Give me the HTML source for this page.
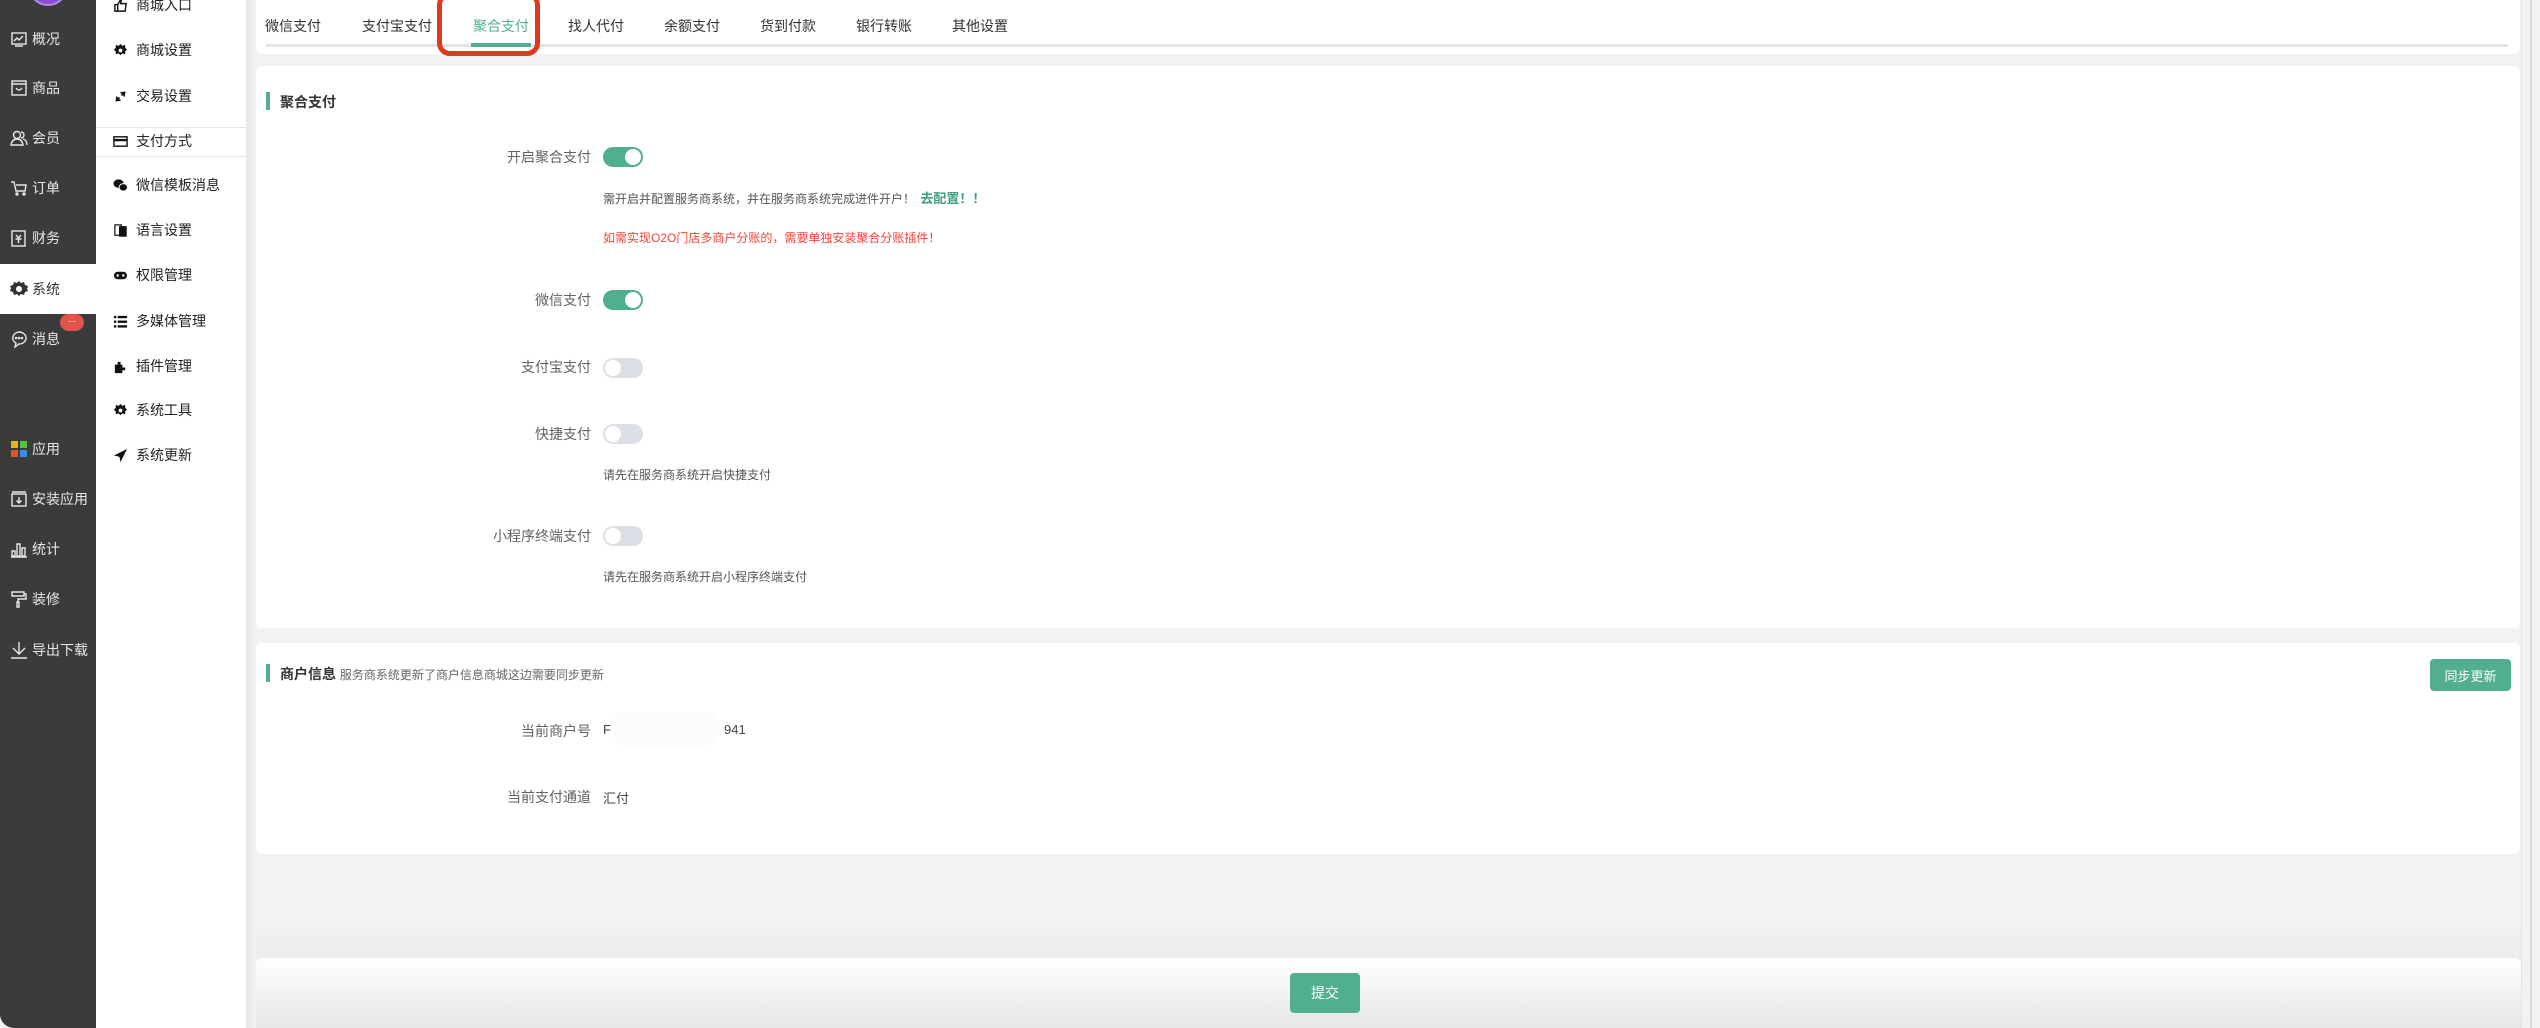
<!DOCTYPE html>
<html><head><meta charset="utf-8">
<style>
*{margin:0;padding:0;box-sizing:border-box}
body{width:2540px;height:1028px;overflow:hidden;background:#f2f2f2;font-family:"Liberation Sans","Noto Sans CJK SC",sans-serif;position:relative;color:#303133}
.abs{position:absolute}
#nav{left:0;top:0;width:96px;height:1028px;background:#3b3b3b;border-bottom-left-radius:14px}
.ni{position:absolute;left:0;width:96px;height:50px;color:#e8e8e8;font-size:14px;display:flex;align-items:center;padding-left:10px}
.ni svg{width:18px;height:18px;margin-right:4px;flex:none}
.ni.act{background:#fff;color:#333}
#sub{left:96px;top:0;width:150px;height:1028px;background:#fff}
#subsh{left:246px;top:0;width:10px;height:1028px;background:linear-gradient(90deg,#e6e6e6,#f2f2f2)}
.si{position:absolute;left:0;width:150px;height:40px;font-size:14px;color:#222;display:flex;align-items:center;padding-left:17px}
.si svg{width:15px;height:15px;margin-right:8px;flex:none}
.card{position:absolute;left:256px;width:2264px;background:#fff;border-radius:6px}
.tab{position:absolute;top:16px;font-size:14px;color:#303133}
.lbl{position:absolute;font-size:14px;color:#606266;text-align:right;width:200px;left:391px}
.sw{position:absolute;left:603px;width:40px;height:20px;border-radius:10px;background:#dcdfe6}
.sw::after{content:"";position:absolute;top:2px;left:2px;width:16px;height:16px;border-radius:50%;background:#fff}
.sw.on{background:#52ae91}
.sw.on::after{left:22px}
.help{position:absolute;left:603px;font-size:12px;color:#555}
.btn{position:absolute;background:#52ae91;color:#fff;border-radius:4px;display:flex;align-items:center;justify-content:center;font-size:13px}
</style></head><body>
<div id="nav" class="abs">
  <div class="abs" style="left:28px;top:-34px;width:40px;height:40px;border-radius:50%;background:#8a4fd0;border:2px solid #b28be6"></div>
  <div class="ni" style="top:14px"><svg viewBox="0 0 18 18" fill="none" stroke="#e8e8e8" stroke-width="1.4"><rect x="2" y="3" width="14" height="11"/><path d="M4 11l3-3 2 2 4-4M5 16h8"/></svg>概况</div>
  <div class="ni" style="top:63px"><svg viewBox="0 0 18 18" fill="none" stroke="#e8e8e8" stroke-width="1.4"><rect x="2" y="2" width="14" height="14"/><path d="M2 5h14M6 9q3 4 6 0"/></svg>商品</div>
  <div class="ni" style="top:113px"><svg viewBox="0 0 18 18" fill="none" stroke="#e8e8e8" stroke-width="1.4"><circle cx="7" cy="6" r="3.5"/><path d="M1 16q1-6 6-6t6 6zM11 3a3 3 0 010 6M13 10q4 1 4 6"/></svg>会员</div>
  <div class="ni" style="top:163px"><svg viewBox="0 0 18 18" fill="none" stroke="#e8e8e8" stroke-width="1.4"><path d="M1 3h3l2 9h9l1-6H6"/><circle cx="7" cy="15" r="1"/><circle cx="14" cy="15" r="1"/></svg>订单</div>
  <div class="ni" style="top:213px"><svg viewBox="0 0 18 18" fill="none" stroke="#e8e8e8" stroke-width="1.4"><rect x="2" y="2" width="13" height="15"/><path d="M6 6l2.5 3L11 6M5.5 10h6M8.5 9v5"/></svg>财务</div>
  <div class="ni act" style="top:264px"><svg viewBox="0 0 18 18"><path fill="#333" d="M9 1l2 2 3-1 1 3 3 1-1 3 1 2-3 1-1 3-3-1-2 2-2-2-3 1-1-3-3-1 1-3-1-2 3-1 1-3 3 1z"/><circle cx="9" cy="9" r="3" fill="#fff"/></svg>系统</div>
  <div class="ni" style="top:314px"><svg viewBox="0 0 18 18" fill="none" stroke="#e8e8e8" stroke-width="1.4"><path d="M9 2a7 6 0 110 12l-4 3 1-4A7 6 0 019 2z"/><circle cx="6" cy="8" r=".6"/><circle cx="9" cy="8" r=".6"/><circle cx="12" cy="8" r=".6"/></svg>消息</div>
  <div class="abs" style="left:60px;top:314px;width:24px;height:17px;border-radius:9px;background:#e0534a;color:#fff;font-size:10px;text-align:center;line-height:12px">...</div>
  <div class="ni" style="top:424px"><svg viewBox="0 0 18 18"><rect x="1" y="1" width="7" height="7" fill="#e5b620"/><rect x="10" y="1" width="7" height="7" fill="#59c13c"/><rect x="1" y="10" width="7" height="7" fill="#e5532b"/><rect x="10" y="10" width="7" height="7" fill="#3a8ee6"/></svg>应用</div>
  <div class="ni" style="top:474px"><svg viewBox="0 0 18 18" fill="none" stroke="#e8e8e8" stroke-width="1.4"><rect x="2" y="4" width="14" height="12"/><path d="M2 2h14M9 7v6M6.5 10.5L9 13l2.5-2.5"/></svg>安装应用</div>
  <div class="ni" style="top:524px"><svg viewBox="0 0 18 18" fill="none" stroke="#e8e8e8" stroke-width="1.4"><path d="M1 17h16M2 11h3v5H2zM7 4h3v12H7zM12 8h3v8h-3z"/></svg>统计</div>
  <div class="ni" style="top:574px"><svg viewBox="0 0 18 18" fill="none" stroke="#e8e8e8" stroke-width="1.4"><path d="M2 2h12v4H2zM14 4h2v5H8v3M7 12h2v5H7z"/></svg>装修</div>
  <div class="ni" style="top:625px"><svg viewBox="0 0 18 18" fill="none" stroke="#e8e8e8" stroke-width="1.4"><path d="M9 1v12M3 7l6 6 6-6M1 17h16"/></svg>导出下载</div>
</div>
<div id="sub" class="abs">
  <div class="si" style="top:-15px"><svg viewBox="0 0 16 16" fill="none" stroke="#111" stroke-width="1.5"><path d="M2 7h3v7H2zM5 7l3-5 1 1-1 3h6l-1 8H5"/></svg>商城入口</div>
  <div class="si" style="top:30px"><svg viewBox="0 0 16 16"><path fill="#111" d="M8 1l2 2 3-1 0 3 2 2-2 2 0 3-3-1-2 2-2-2-3 1 0-3-2-2 2-2 0-3 3 1z"/><circle cx="8" cy="8" r="2" fill="#fff"/></svg>商城设置</div>
  <div class="si" style="top:76px"><svg viewBox="0 0 16 16" fill="none" stroke="#111" stroke-width="1.8"><path d="M3 13l4-4M9 7l4-4M4 8v4h4M8 4h4v4"/></svg>交易设置</div>
  <div class="abs" style="left:0;top:127px;width:150px;height:1px;background:#e6e6e6"></div>
  <div class="abs" style="left:0;top:156px;width:150px;height:1px;background:#e6e6e6"></div>
  <div class="si" style="top:121px"><svg viewBox="0 0 16 16" fill="none" stroke="#111" stroke-width="1.5"><rect x="1" y="3" width="14" height="10"/><path d="M1 6.5h14" stroke-width="2.5"/></svg>支付方式</div>
  <div class="si" style="top:165px"><svg viewBox="0 0 16 16"><ellipse cx="6" cy="6" rx="5.5" ry="4.5" fill="#111"/><ellipse cx="11" cy="10" rx="4.5" ry="4" fill="#111" stroke="#fff" stroke-width="1"/></svg>微信模板消息</div>
  <div class="si" style="top:210px"><svg viewBox="0 0 16 16" fill="none" stroke="#111" stroke-width="1.3"><rect x="2" y="2" width="7" height="11"/><rect x="7" y="4" width="7" height="10" fill="#111"/></svg>语言设置</div>
  <div class="si" style="top:255px"><svg viewBox="0 0 16 16"><rect x="1" y="4" width="14" height="8" rx="4" fill="#111"/><circle cx="5" cy="8" r="1.3" fill="#fff"/><circle cx="11" cy="8" r="1.3" fill="#fff"/></svg>权限管理</div>
  <div class="si" style="top:301px"><svg viewBox="0 0 16 16" fill="#111"><rect x="1" y="2" width="2.5" height="2.5"/><rect x="1" y="7" width="2.5" height="2.5"/><rect x="1" y="12" width="2.5" height="2.5"/><rect x="5" y="2" width="10" height="2.5"/><rect x="5" y="7" width="10" height="2.5"/><rect x="5" y="12" width="10" height="2.5"/></svg>多媒体管理</div>
  <div class="si" style="top:346px"><svg viewBox="0 0 16 16" fill="#111"><path d="M2 6h3V3h3v3h2v3h3v3h-3v3H2z"/></svg>插件管理</div>
  <div class="si" style="top:390px"><svg viewBox="0 0 16 16"><path fill="#111" d="M8 1l2 2 3-1 0 3 2 2-2 2 0 3-3-1-2 2-2-2-3 1 0-3-2-2 2-2 0-3 3 1z"/><circle cx="8" cy="8" r="2" fill="#fff"/></svg>系统工具</div>
  <div class="si" style="top:435px"><svg viewBox="0 0 16 16" fill="#111"><path d="M15 1L1 8l5 1zM15 1L7 10l1 5 2-4zM15 1l-8 9-1-1z"/></svg>系统更新</div>
</div>
<div id="subsh" class="abs"></div>

<div class="card" style="top:0;height:54px;border-radius:0 0 6px 6px">
  <div class="abs" style="left:10px;top:44px;width:2242px;height:3px;background:#e0e4e8"></div>
  <div class="tab" style="left:9px">微信支付</div>
  <div class="tab" style="left:106px">支付宝支付</div>
  <div class="tab" style="left:217px;color:#52ae91">聚合支付</div>
  <div class="abs" style="left:215px;top:43px;width:60px;height:4px;background:#52ae91"></div>
  <div class="tab" style="left:312px">找人代付</div>
  <div class="tab" style="left:408px">余额支付</div>
  <div class="tab" style="left:504px">货到付款</div>
  <div class="tab" style="left:600px">银行转账</div>
  <div class="tab" style="left:696px">其他设置</div>
</div>
<div class="abs" style="left:437px;top:-8px;width:103px;height:64px;border:5px solid #e0391f;border-radius:13px"></div>

<div class="card" style="top:66px;height:562px">
  <div class="abs" style="left:10px;top:26px;width:4px;height:18px;background:#52ae91"></div>
  <div class="abs" style="left:24px;top:26px;font-size:14px;font-weight:bold;color:#333">聚合支付</div>
</div>
<div class="lbl" style="top:147px">开启聚合支付</div><div class="sw on" style="top:147px"></div>
<div class="help" style="top:188px">需开启并配置服务商系统，并在服务商系统完成进件开户！ <b style="color:#3f9e7e;font-size:13px;margin-left:2px">去配置！！</b></div>
<div class="help" style="top:229px;color:#f2453a">如需实现O2O门店多商户分账的，需要单独安装聚合分账插件！</div>
<div class="lbl" style="top:290px">微信支付</div><div class="sw on" style="top:290px"></div>
<div class="lbl" style="top:357px">支付宝支付</div><div class="sw" style="top:358px"></div>
<div class="lbl" style="top:424px">快捷支付</div><div class="sw" style="top:424px"></div>
<div class="help" style="top:466px">请先在服务商系统开启快捷支付</div>
<div class="lbl" style="top:526px">小程序终端支付</div><div class="sw" style="top:526px"></div>
<div class="help" style="top:568px">请先在服务商系统开启小程序终端支付</div>

<div class="card" style="top:643px;height:211px">
  <div class="abs" style="left:10px;top:21px;width:4px;height:18px;background:#52ae91"></div>
  <div class="abs" style="left:24px;top:21px;font-size:14px;font-weight:bold;color:#333">商户信息 <span style="font-weight:normal;font-size:12px;color:#666">服务商系统更新了商户信息商城这边需要同步更新</span></div>
  <div class="btn" style="left:2174px;top:16px;width:81px;height:32px">同步更新</div>
</div>
<div class="lbl" style="top:721px">当前商户号</div>
<div class="abs" style="left:603px;top:722px;font-size:13px;color:#444">F</div>
<div class="abs" style="left:612px;top:712px;width:108px;height:34px;background:#fcfcfc;border-radius:14px"></div>
<div class="abs" style="left:724px;top:722px;font-size:13px;color:#444">941</div>
<div class="lbl" style="top:787px">当前支付通道</div>
<div class="abs" style="left:603px;top:788px;font-size:13px;color:#444">汇付</div>

<div class="abs" style="left:256px;top:920px;width:2265px;height:40px;background:linear-gradient(#f2f2f2,#ececec)"></div>
<div class="abs" style="left:256px;top:958px;width:2265px;height:70px;background:linear-gradient(#fff,#e6e6e6);border-radius:6px 6px 0 0"></div>
<div class="btn" style="left:1290px;top:973px;width:70px;height:40px;font-size:14px">提交</div>
<div class="abs" style="left:2521px;top:0;width:19px;height:1028px;background:#f2f2f2;border-left:1px solid #e4e4e4"></div>
<div class="abs" style="left:2530px;top:0;width:2px;height:1028px;background:#ddd"></div>
</body></html>
